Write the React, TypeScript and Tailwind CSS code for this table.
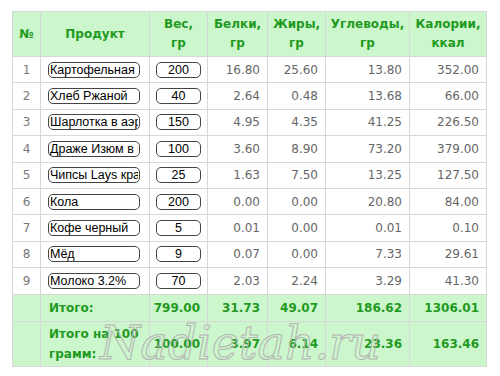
import React from 'react';

interface Row {
  name: string;
  weight: string;
  protein: string;
  fat: string;
  carbs: string;
  kcal: string;
}

const ROWS: Row[] = [
  { name: 'Картофельная запеканка', weight: '200', protein: '16.80', fat: '25.60', carbs: '13.80', kcal: '352.00' },
  { name: 'Хлеб Ржаной', weight: '40', protein: '2.64', fat: '0.48', carbs: '13.68', kcal: '66.00' },
  { name: 'Шарлотка в аэрогриле', weight: '150', protein: '4.95', fat: '4.35', carbs: '41.25', kcal: '226.50' },
  { name: 'Драже Изюм в шоколаде', weight: '100', protein: '3.60', fat: '8.90', carbs: '73.20', kcal: '379.00' },
  { name: 'Чипсы Lays краб', weight: '25', protein: '1.63', fat: '7.50', carbs: '13.25', kcal: '127.50' },
  { name: 'Кола', weight: '200', protein: '0.00', fat: '0.00', carbs: '20.80', kcal: '84.00' },
  { name: 'Кофе черный', weight: '5', protein: '0.01', fat: '0.00', carbs: '0.01', kcal: '0.10' },
  { name: 'Мёд', weight: '9', protein: '0.07', fat: '0.00', carbs: '7.33', kcal: '29.61' },
  { name: 'Молоко 3.2%', weight: '70', protein: '2.03', fat: '2.24', carbs: '3.29', kcal: '41.30' },
];

const HEAD = [
  { label: ['№'], width: 28 },
  { label: ['Продукт'], width: 109 },
  { label: ['Вес,', 'гр'], width: 58 },
  { label: ['Белки,', 'гр'], width: 60 },
  { label: ['Жиры,', 'гр'], width: 58 },
  { label: ['Углеводы,', 'гр'], width: 84 },
  { label: ['Калории,', 'ккал'], width: 77 },
];

const cell = 'border border-[#d8d8d8] p-0';
const num = `${cell} text-right pr-[7px] text-[#666]`;
const totalNum = `${cell} text-right pr-[7px] font-bold text-[#1f9a1f]`;

export default function App() {
  return (
    <div className="relative bg-white w-[500px] h-[376px] pt-[11px] pl-[12px] font-['DejaVu_Sans',Verdana,sans-serif] text-[12px]">
      <table className="border-collapse table-fixed w-[474px]">
        <colgroup>
          {HEAD.map((h, i) => (
            <col key={i} style={{ width: h.width }} />
          ))}
        </colgroup>
        <thead>
          <tr className="h-[45px] bg-[#ccf6cc]">
            {HEAD.map((h, i) => (
              <th key={i} className={`${cell} text-center font-bold text-[#1f9a1f] leading-[19px]`}>
                {h.label.map((l) => (
                  <div key={l}>{l}</div>
                ))}
              </th>
            ))}
          </tr>
        </thead>
        <tbody>
          {ROWS.map((r, i) => (
            <tr key={i} className="h-[26.4px]">
              <td className={`${cell} text-center text-[#777]`}>{i + 1}</td>
              <td className={`${cell} pl-[7px]`}>
                <input
                  readOnly
                  value={r.name}
                  className="block w-[92px] h-[16px] border border-[#444] rounded-[5px] px-[1px] text-[12.5px] leading-[14px] text-black font-['Liberation_Sans',Arial,sans-serif] outline-none"
                />
              </td>
              <td className={`${cell} pl-[6px]`}>
                <input
                  readOnly
                  value={r.weight}
                  className="block w-[45px] h-[16px] border border-[#444] rounded-[5px] text-center text-[12.5px] leading-[14px] text-black font-['Liberation_Sans',Arial,sans-serif] outline-none"
                />
              </td>
              <td className={num}>{r.protein}</td>
              <td className={num}>{r.fat}</td>
              <td className={num}>{r.carbs}</td>
              <td className={num}>{r.kcal}</td>
            </tr>
          ))}
          <tr className="h-[27px] bg-[#ccf6cc]">
            <td className={cell}></td>
            <td className={`${cell} pl-[8px] font-bold text-[#1f9a1f]`}>Итого:</td>
            <td className={totalNum}>799.00</td>
            <td className={totalNum}>31.73</td>
            <td className={totalNum}>49.07</td>
            <td className={totalNum}>186.62</td>
            <td className={totalNum}>1306.01</td>
          </tr>
          <tr className="h-[45px] bg-[#ccf6cc]">
            <td className={cell}></td>
            <td className={`${cell} pl-[8px] font-bold text-[#1f9a1f] leading-[20px]`}>Итого на 100 грамм:</td>
            <td className={totalNum}>100.00</td>
            <td className={totalNum}>3.97</td>
            <td className={totalNum}>6.14</td>
            <td className={totalNum}>23.36</td>
            <td className={totalNum}>163.46</td>
          </tr>
        </tbody>
      </table>
      <div className="absolute left-[100px] top-[320px] text-[46px] italic leading-none text-transparent font-['DejaVu_Serif',serif] [-webkit-text-stroke:1px_#b4b4b4] pointer-events-none select-none">
        Nadietah.ru
      </div>
    </div>
  );
}
